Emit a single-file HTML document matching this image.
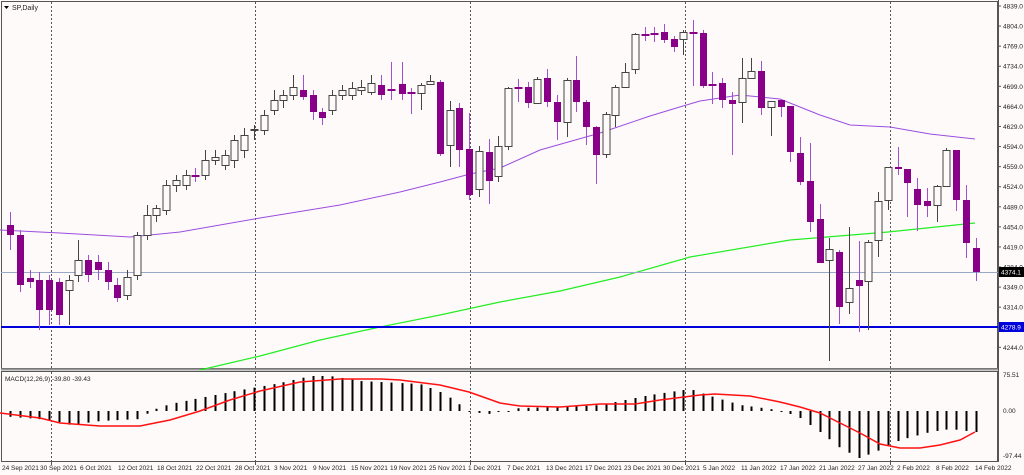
<!DOCTYPE html>
<html><head><meta charset="utf-8"><style>
html,body{margin:0;padding:0;background:#fffafa;overflow:hidden}
svg{display:block;font-family:"Liberation Sans",sans-serif}
</style></head><body>
<svg id="s" width="1024" height="475" viewBox="0 0 1024 475" xmlns="http://www.w3.org/2000/svg">
<rect width="1024" height="475" fill="#fffafa"/>
<g id="g"></g>
</svg>
<script>
var g=document.getElementById('g'),h='';
function L(x1,y1,x2,y2,c,w,d){h+='<line x1="'+x1+'" y1="'+y1+'" x2="'+x2+'" y2="'+y2+'" stroke="'+c+'" stroke-width="'+(w||1)+'"'+(d?' stroke-dasharray="'+d+'"':'')+'/>';}
function T(x,y,t,a,c,s){h+='<text x="'+x+'" y="'+y+'" font-size="'+(s||7)+'" fill="'+(c||'#000')+'" text-anchor="'+(a||'start')+'">'+t+'</text>';}
h+='<rect x="1.5" y="1.5" width="996" height="367" fill="none" stroke="#555"/>';
h+='<rect x="1.5" y="371.5" width="996" height="90" fill="none" stroke="#555"/>';
L(1,369.5,998,369.5,'#999',2);
[51,255,470,685,890].forEach(function(x){L(x+.5,2,x+.5,368,'#555',1,'2,2');L(x+.5,372,x+.5,461,'#555',1,'2,2');L(x+.5,461,x+.5,465,'#555');});
h+='<polyline fill="none" stroke="#9b4dde" stroke-width="1" points="0,230 60,233 130,237 180,232 260,218 340,205 400,192 440,182 470,174 500,168 540,150 600,133 650,116 683,106 700,101 740,95 780,99 820,115 850,125 890,127 930,134 975,139"/>';
h+='<polyline fill="none" stroke="#22ee22" stroke-width="1.2" points="200,370 260,356 320,340 380,327 440,315 500,302 560,291 620,277 690,257 790,240 888,232 975,223"/>';
L(1,272.5,998,272.5,'#9aa8c8',1);
L(1,327,998,327,'#0000dd',2);
var c0=[[225,235,212,250],[235,285,230,292],[278,282,270,288],[280,310,272,330],[280,310,275,325],[282,315,278,325],[290,280,275,325],[275,260,240,282],[260,275,255,282],[262,270,255,280],[270,282,262,290],[285,298,278,302],[295,277,270,300],[275,235,232,280],[235,215,205,240],[215,208,205,222],[210,185,180,215],[185,180,175,192],[185,175,170,190],[176,176,168,182],[175,160,150,180],[160,157,150,165],[165,155,150,170],[160,140,135,168],[150,135,128,158],[130,129,125,140],[130,115,110,135],[110,100,90,115],[100,95,90,108],[95,87,75,100],[90,97,75,100],[95,112,90,120],[112,118,108,125],[110,95,90,115],[95,90,85,100],[95,88,82,100],[90,87,80,95],[92,83,75,95],[85,95,75,100],[90,90,62,100]];
var C=[];
c0.forEach(function(k,i){C.push([10+i*9.76].concat(k));});
// x, open, close, high, low  (white: close<open in y)
var c1=[[402,84,94,62,100],[411,93,93,88,114],[421,93,85,83,110],[430,84,81,75,84],[440,82,154,80,156],[450,145,110,101,167],[459,108,150,103,167],[469,149,195,113,200],[479,189,151,146,197],[489,152,181,139,204],[498,176,146,136,182],[508,146,88,87,150],[518,88,88,79,102],[528,87,103,82,108],[537,103,79,77,104],[547,78,102,69,107],[557,102,122,95,140],[567,122,80,78,137],[576,80,102,56,112],[586,102,127,100,145],[596,127,155,126,184],[606,154,114,112,158],[615,115,87,85,127],[625,87,72,63,88],[635,69,34,33,74],[645,35,35,27,41],[654,34,34,27,42],[664,32,40,24,43],[674,39,47,36,52],[683,39,32,30,55],[693,33,33,20,86],[703,33,86,30,88],[712,85,85,72,104],[722,83,100,78,108],[732,100,104,92,155],[742,102,78,58,123],[751,78,71,58,78],[761,71,108,61,115],[771,107,101,101,136],[781,100,107,100,117],[790,106,152,106,162],[800,153,182,137,185],[810,181,222,143,232],[820,219,263,204,263],[829,260,249,238,361],[839,252,307,250,324],[849,302,288,227,314],[859,280,286,241,332],[868,281,242,240,330],[878,240,201,192,257],[888,200,167,167,210],[898,167,169,147,175],[907,169,183,169,217],[917,189,205,178,231],[927,201,206,188,217],[937,205,186,185,222],[946,186,150,148,187],[956,150,200,150,211],[966,200,243,185,258],[976,248,272,238,281]];
C=C.concat(c1);
C.forEach(function(k){var x=Math.round(k[0])+.5,o=k[1],cl=k[2],up=cl<o,col=up?'#444':'#880088',wc=up?'#444':'#a050d0';
 L(x,k[3],x,k[4],wc,1);
 var t=Math.min(o,cl),b=Math.max(o,cl);
 if(b-t<1){L(x-4,t,x+4,t,col,2);}
 else if(up) h+='<rect x="'+(x-3.5)+'" y="'+(t+.5)+'" width="7" height="'+(b-t)+'" fill="#fffafa" stroke="#444"/>';
 else h+='<rect x="'+(x-3.5)+'" y="'+t+'" width="7" height="'+(b-t)+'" fill="#880088"/>';
});
function interp(p,x){for(var j=0;j<p.length-1;j++){if(x<=p[j+1][0]){var a=p[j],b=p[j+1];return a[1]+(b[1]-a[1])*(x-a[0])/(b[0]-a[0]);}}return p[p.length-1][1];}
var hp=[[0,416],[50,420],[70,425],[100,421],[140,419],[150,411],[170,404],[230,392],[280,383],[310,376],[330,376],[360,381],[420,384],[445,394],[460,405],[470,412],[490,414],[505,410],[520,408],[560,407],[600,405],[625,400],[650,395],[690,389],[710,396],[740,405],[770,409],[785,412],[800,418],[820,432],[840,448],[859,458],[875,452],[888,446],[900,440],[930,432],[950,429],[975,432]];
C.forEach(function(k){var x=Math.round(k[0])+.5,v=interp(hp,k[0]);if(Math.abs(v-411)<1.5)v=412;L(x,Math.min(v,411),x,Math.max(v,411),'#000',2);});
h+='<polyline fill="none" stroke="#ff1111" stroke-width="1.5" points="0,413 40,418 60,423 100,426 140,426 170,420 200,411 230,400 260,391 300,382 340,379 380,379 400,380 440,385 469,392 500,403 520,406 560,407 600,404 635,404 660,400 700,395 715,394 750,396 780,402 800,407 820,413 840,423 860,433 880,444 900,448 920,448 940,445 960,440 975,432"/>';
L(998.5,0,998.5,462,'#555');
for(var k=0;k<18;k++){var p=4839-35*k,y=6+(4839-p)*362/631;L(998,y,1001,y,'#555');T(1003,y+2.5,p.toFixed(1),'start','#222',6.5);}
h+='<rect x="999" y="267" width="25" height="10" fill="#000"/>';T(1001,274.5,'4374.1','start','#fff',6.5);
h+='<rect x="999" y="322" width="25" height="10" fill="#0000dd"/>';T(1001,329.5,'4278.9','start','#fff',6.5);
T(1003,377,'75.51','start','#222',6.5);T(1003,413,'0.00','start','#222',6.5);T(1003,458,'-97.44','start','#222',6.5);
h+='<path d="M4,6 L9,6 L6.5,9 Z" fill="#000"/>';T(12,10,'SP,Daily','start','#222',7);
T(5,381,'MACD(12,26,9) -39.80 -39.43','start','#222',6.5);
var d=[['24 Sep 2021',2],['30 Sep 2021',40],['6 Oct 2021',80],['12 Oct 2021',118],['18 Oct 2021',157],['22 Oct 2021',196],['28 Oct 2021',235],['3 Nov 2021',274],['9 Nov 2021',313],['15 Nov 2021',351],['19 Nov 2021',390],['25 Nov 2021',429],['1 Dec 2021',468],['7 Dec 2021',507],['13 Dec 2021',546],['17 Dec 2021',585],['23 Dec 2021',624],['30 Dec 2021',663],['5 Jan 2022',703],['11 Jan 2022',741],['17 Jan 2022',780],['21 Jan 2022',819],['27 Jan 2022',858],['2 Feb 2022',897],['8 Feb 2022',936],['14 Feb 2022',975]];
d.forEach(function(a){T(a[1],470,a[0],'start','#222',6.5);});
g.innerHTML=h;
</script>
</body></html>
